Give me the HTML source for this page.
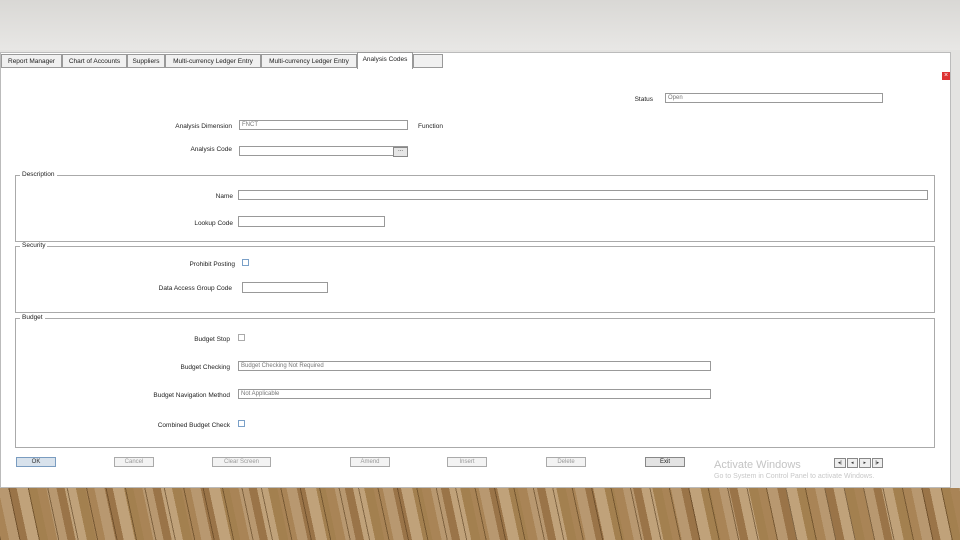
<!DOCTYPE html>
<html><head><style>
body{margin:0;width:960px;height:540px;position:relative;overflow:hidden;font-family:"Liberation Sans",sans-serif;font-size:6.5px;color:#333;background:#e4e3e1}
.a{position:absolute}
.top{left:0;top:0;width:960px;height:50px;background:linear-gradient(#d9d8d5,#e8e7e5)}
.win{left:0;top:52px;width:951px;height:436px;background:#fff;border:1px solid #bbb;box-sizing:border-box}
.tabs{left:0;top:52px;height:16px;width:960px}
.tab{position:absolute;top:2px;height:14px;border:1px solid #999;background:#f0f0f0;font-size:6.5px;line-height:13px;text-align:center;box-sizing:border-box;color:#222}
.inp{position:absolute;border:1px solid #999;height:10px;box-sizing:border-box;background:#fff;font-size:6px;line-height:8px;padding-left:2px;color:#777}
.lbl{position:absolute;text-align:right;font-size:6.5px;color:#222}
.grp{position:absolute;left:15px;width:920px;border:1px solid #aaa;box-sizing:border-box}
.gt{position:absolute;top:-5px;left:4px;background:#fff;font-size:6.5px;padding:0 2px;color:#222}
.cb{position:absolute;width:7px;height:7px;border:1px solid #7aa0c8;box-sizing:border-box}
.btn{position:absolute;top:457px;height:10px;width:40px;border:1px solid #aaa;background:#f3f3f3;font-size:6px;line-height:8px;text-align:center;color:#999;box-sizing:border-box}
.wood{left:0;top:488px;width:960px;height:52px;background:
repeating-linear-gradient(78deg,rgba(80,55,25,.55) 0 1px,transparent 1px 19px),
repeating-linear-gradient(78deg,#a98456 0 9px,#b89870 9px 19px,#9a7448 19px 27px,#c0a27a 27px 38px,#a3804f 38px 47px);}
</style></head><body>
<div class="a top"></div>
<div class="a win"></div>
<div class="a tabs">
<div class="tab" style="left:1px;width:61px">Report Manager</div>
<div class="tab" style="left:62px;width:65px">Chart of Accounts</div>
<div class="tab" style="left:127px;width:38px">Suppliers</div>
<div class="tab" style="left:165px;width:96px">Multi-currency Ledger Entry</div>
<div class="tab" style="left:261px;width:96px">Multi-currency Ledger Entry</div>
<div class="tab" style="left:357px;width:56px;top:0;height:17px;background:#fff;border-bottom:none">Analysis Codes</div>
<div class="tab" style="left:413px;width:30px"></div>
</div>
<div class="a" style="left:942px;top:72px;width:8px;height:8px;background:#d33;color:#fff;font-size:7px;line-height:8px;text-align:center">×</div>
<div class="lbl" style="left:600px;top:96px;width:53px">Status</div>
<div class="inp" style="left:665px;top:93px;width:218px">Open</div>
<div class="lbl" style="left:140px;top:123px;width:92px">Analysis Dimension</div>
<div class="inp" style="left:239px;top:120px;width:169px">FNCT</div>
<div class="lbl" style="left:418px;top:123px">Function</div>
<div class="lbl" style="left:140px;top:146px;width:92px">Analysis Code</div>
<div class="inp" style="left:239px;top:146px;width:169px"></div>
<div class="a" style="left:393px;top:147px;width:13px;height:8px;border:1px solid #888;background:#e6e6e6;font-size:6px;line-height:5px;text-align:center">...</div>
<div class="grp" style="top:175px;height:67px"><span class="gt">Description</span></div>
<div class="lbl" style="left:180px;top:193px;width:53px">Name</div>
<div class="inp" style="left:238px;top:190px;width:690px"></div>
<div class="lbl" style="left:160px;top:220px;width:73px">Lookup Code</div>
<div class="inp" style="left:238px;top:216px;width:147px;height:11px"></div>
<div class="grp" style="top:246px;height:67px"><span class="gt">Security</span></div>
<div class="lbl" style="left:150px;top:261px;width:85px">Prohibit Posting</div>
<div class="cb" style="left:242px;top:259px"></div>
<div class="lbl" style="left:120px;top:285px;width:112px">Data Access Group Code</div>
<div class="inp" style="left:242px;top:282px;width:86px;height:11px"></div>
<div class="grp" style="top:318px;height:130px"><span class="gt">Budget</span></div>
<div class="lbl" style="left:150px;top:336px;width:80px">Budget Stop</div>
<div class="cb" style="left:238px;top:334px;border-color:#aaa"></div>
<div class="lbl" style="left:150px;top:364px;width:80px">Budget Checking</div>
<div class="inp" style="left:238px;top:361px;width:473px">Budget Checking Not Required</div>
<div class="lbl" style="left:120px;top:392px;width:110px">Budget Navigation Method</div>
<div class="inp" style="left:238px;top:389px;width:473px">Not Applicable</div>
<div class="lbl" style="left:130px;top:422px;width:100px">Combined Budget Check</div>
<div class="cb" style="left:238px;top:420px"></div>
<div class="btn" style="left:16px;background:#d8e2ec;color:#333;border-color:#7a9cc0">OK</div>
<div class="btn" style="left:114px">Cancel</div>
<div class="btn" style="left:212px;width:59px">Clear Screen</div>
<div class="btn" style="left:350px">Amend</div>
<div class="btn" style="left:447px">Insert</div>
<div class="btn" style="left:546px">Delete</div>
<div class="btn" style="left:645px;background:#e3e3e3;color:#222;border-color:#888">Exit</div>
<div class="a" style="left:714px;top:459px;font-size:11px;color:#c4c4c4">Activate Windows</div>
<div class="a" style="left:714px;top:473px;font-size:7px;color:#c8c8c8">Go to System in Control Panel to activate Windows.</div>
<div class="a" style="left:834px;top:458px;width:49px;height:10px;display:flex;gap:1px">
<div style="flex:1;border:1px solid #888;background:#eee;font-size:5px;text-align:center;line-height:8px">◂|</div>
<div style="flex:1;border:1px solid #888;background:#eee;font-size:5px;text-align:center;line-height:8px">◂</div>
<div style="flex:1;border:1px solid #888;background:#eee;font-size:5px;text-align:center;line-height:8px">▸</div>
<div style="flex:1;border:1px solid #888;background:#eee;font-size:5px;text-align:center;line-height:8px">|▸</div>
</div>
<div class="a wood"></div>
</body></html>
